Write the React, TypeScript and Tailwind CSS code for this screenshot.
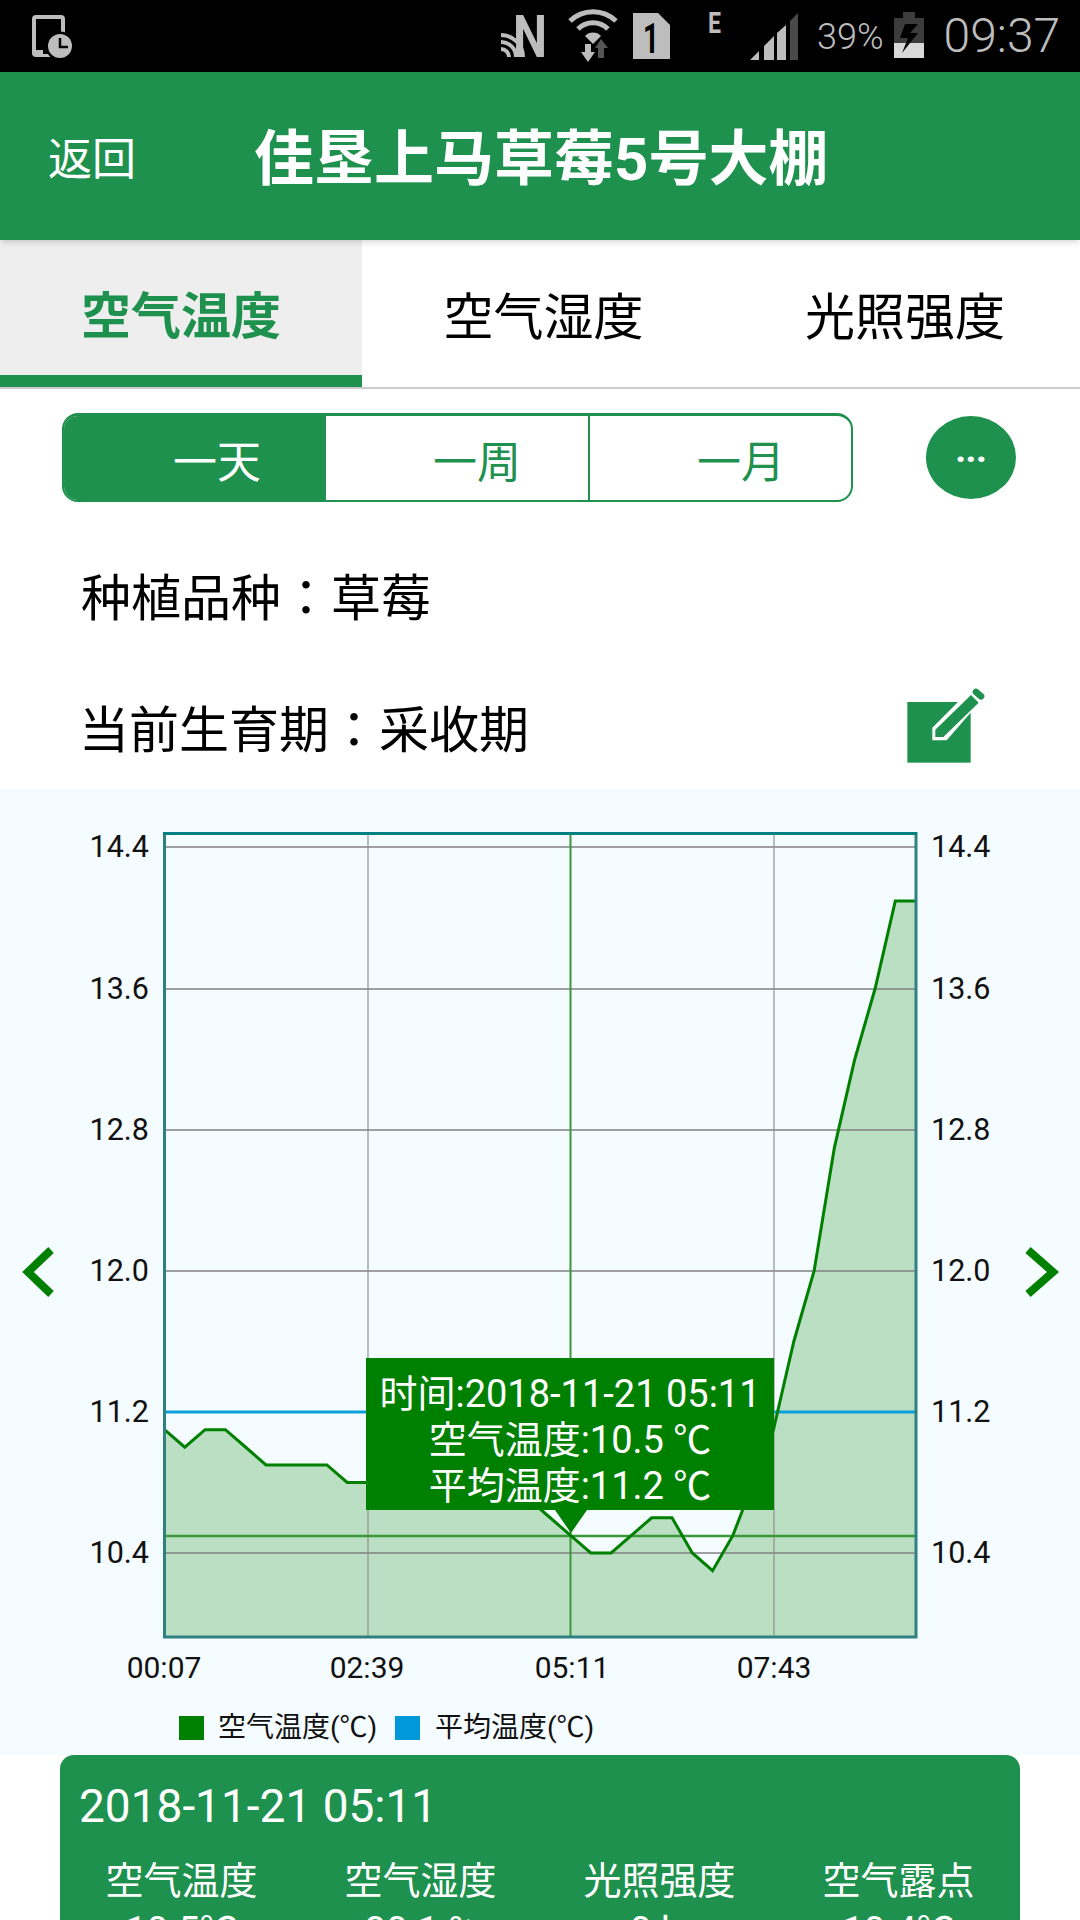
const green = "#008000";

// temperature readings, one per 20.3px step along the x axis
const temps = [
  11.1, 11.0, 11.1, 11.1, 11.0, 10.9, 10.9, 10.9, 10.9, 10.8, 10.8, 10.8, 10.8, 10.7, 10.7, 10.7, 10.7, 10.7, 10.7,
  10.6, 10.5, 10.4, 10.4, 10.5, 10.6, 10.6, 10.4, 10.3, 10.5, 10.8, 11.1, 11.6, 12.0, 12.7, 13.2, 13.6, 14.1, 14.1,
];
const px = (i: number) => 164.5 + i * 20.3;
const py = (v: number) => 1553 - (v - 10.4) * 176.25;
const linePoints = temps.map((v, i) => `${px(i)},${py(v)}`).join(" ");
const areaPoints = `${px(0)},1637 ${linePoints} ${px(37)},1637`;

const yTicks = [
  { label: "14.4", y: 847 },
  { label: "13.6", y: 989 },
  { label: "12.8", y: 1130 },
  { label: "12.0", y: 1271 },
  { label: "11.2", y: 1412 },
  { label: "10.4", y: 1553 },
];
const xTicks = [
  { label: "00:07", x: 164 },
  { label: "02:39", x: 367 },
  { label: "05:11", x: 572 },
  { label: "07:43", x: 774 },
];

function StatusIcons() {
  return (
    <svg className="h-[72px] w-[310px]" viewBox="495 0 310 72">
      {/* nfc */}
      <g fill="none" stroke="#bdbdbd" strokeWidth="4">
        <path d="M501,49 A8,8 0 0 1 509,57" />
        <path d="M501,42 A15,15 0 0 1 516,57" />
        <path d="M501,35 A22,22 0 0 1 523,57" />
      </g>
      <text x="513" y="57" fill="#bdbdbd" fontSize="60" fontWeight="700" textLength="34" lengthAdjust="spacingAndGlyphs">
        N
      </text>
      {/* wifi */}
      <g fill="none" stroke="#bdbdbd" strokeWidth="5">
        <path d="M570,21 A33,33 0 0 1 616,21" />
        <path d="M578,29 A21,21 0 0 1 608,29" />
      </g>
      <path d="M593,44 L585,36 A11,11 0 0 1 601,36 Z" fill="#bdbdbd" />
      <path d="M585,44 h6 v8 h4 l-7,10 l-7,-10 h4 Z" fill="#bdbdbd" />
      <path d="M598,58 v-10 h-3 l6,-9 l7,9 h-4 v10 Z" fill="#555" />
      {/* sim */}
      <path d="M633,13 H658 L670,25 V59 H633 Z" fill="#bdbdbd" />
      <text x="643" y="53" fill="#000" fontSize="42" fontWeight="700" textLength="16" lengthAdjust="spacingAndGlyphs">
        1
      </text>
      {/* network type */}
      <text x="708" y="33" fill="#bdbdbd" fontSize="29" fontWeight="700" textLength="13" lengthAdjust="spacingAndGlyphs">
        E
      </text>
      {/* signal */}
      <path d="M750,60 L759,51 V60 Z M764,46 L774,36 V60 H764 Z M777,33 L786,25 V60 H777 Z" fill="#bdbdbd" />
      <path d="M790,21 L798,13 V60 H790 Z" fill="#4a4a4a" />
    </svg>
  );
}

function Battery() {
  return (
    <svg className="h-[72px] w-[30px]" viewBox="892 0 30 72">
      <path d="M901,12 H913 V18 H922 V43 H892 V18 H901 Z" fill="#3c3c3c" />
      <rect x="892" y="43" width="30" height="15" fill="#d8d8d8" />
      <path d="M903,24 H916 L908,33 H916 L900,53 L906,38 H898 Z" fill="#000" />
    </svg>
  );
}

function Chevron({ d }: { d: string }) {
  return (
    <svg className="h-[60px] w-[70px] shrink-0" viewBox="0 0 70 60">
      <path d={d} fill="none" stroke={green} strokeWidth="8" />
    </svg>
  );
}

function Chart() {
  return (
    <div className="relative h-[966px] w-[940px]">
      <svg className="h-[966px] w-[940px]" viewBox="70 789 940 966">
        <polygon points={areaPoints} fill="#bbdfc3" />
        {yTicks.map((t) => (
          <line key={t.label} x1="165" x2="916" y1={t.y} y2={t.y} stroke="#808080" strokeWidth="1.5" />
        ))}
        {[368, 774].map((x) => (
          <line key={x} x1={x} x2={x} y1="833" y2="1637" stroke="#909090" strokeWidth="1.2" />
        ))}
        <line x1="570.5" x2="570.5" y1="833" y2="1637" stroke="#3c963c" strokeWidth="2" />
        <line x1="165" x2="916" y1="1536" y2="1536" stroke="#3c963c" strokeWidth="2.4" />
        <line x1="165" x2="916" y1="1412" y2="1412" stroke="#0b9fdc" strokeWidth="3" />
        <polyline points={linePoints} fill="none" stroke={green} strokeWidth="3" />
        <rect x="164.5" y="833.5" width="751.5" height="803.5" fill="none" stroke="#2f8080" strokeWidth="3" />
        <line x1="163" x2="917" y1="833.5" y2="833.5" stroke="#008080" strokeWidth="3" />
        <g fill="#111">
          {yTicks.map((t) => (
            <g key={t.label} fontSize="30.5">
              <text x="149" y={t.y + 10} textAnchor="end">
                {t.label}
              </text>
              <text x="931" y={t.y + 10}>
                {t.label}
              </text>
            </g>
          ))}
          {xTicks.map((t) => (
            <text key={t.label} x={t.x} y="1678" fontSize="30" textAnchor="middle">
              {t.label}
            </text>
          ))}
        </g>
      </svg>

      <div className="absolute left-[109px] top-[925px] flex items-center text-[28px] leading-none text-[#111]">
        <span className="h-[24px] w-[25px] bg-[#008000]" />
        <span className="ml-[14px] w-[177px]">空气温度(℃)</span>
        <span className="h-[24px] w-[25px] bg-[#0098d9]" />
        <span className="ml-[15px]">平均温度(℃)</span>
      </div>

      <div className="absolute left-[296px] top-[569px] flex h-[152px] w-[408px] flex-col justify-center bg-[#008000] pt-[12px] text-center text-[38px] leading-[46px] text-white">
        <div>时间:2018-11-21 05:11</div>
        <div>空气温度:10.5 ℃</div>
        <div>平均温度:11.2 ℃</div>
        <div className="absolute left-[189px] top-full h-0 w-0 border-x-[16px] border-t-[23px] border-x-transparent border-t-[#008000]" />
      </div>
    </div>
  );
}

export default function App() {
  const tabs = ["空气温度", "空气湿度", "光照强度"];
  const stats = [
    { name: "空气温度", value: "10.5℃" },
    { name: "空气湿度", value: "30.1 %" },
    { name: "光照强度", value: "0 lx" },
    { name: "空气露点", value: "10.4℃" },
  ];

  return (
    <div className="flex h-[1920px] w-[1080px] flex-col overflow-hidden bg-white font-['Roboto','Noto_Sans_CJK_JP',sans-serif]">
      {/* status bar */}
      <div className="flex h-[72px] shrink-0 items-center bg-black text-[#bdbdbd]">
        <svg className="ml-[28px] h-[72px] w-[50px]" viewBox="28 0 50 72">
          <path d="M36,15 H61 A4,4 0 0 1 65,19 V57 H36 A4,4 0 0 1 32,53 V19 A4,4 0 0 1 36,15 Z M36,19 V50 H61 V19 Z" fill="#bdbdbd" fillRule="evenodd" />
          <circle cx="60" cy="46" r="14.5" fill="#000" />
          <circle cx="60" cy="46" r="12" fill="#bdbdbd" />
          <path d="M60,38 V47 H68" fill="none" stroke="#000" strokeWidth="2.5" />
          <rect x="43" y="50" width="5" height="4" fill="#000" />
        </svg>
        <div className="ml-[417px]">
          <StatusIcons />
        </div>
        <span className="ml-[12px] pt-[2px] text-[36px] font-light leading-none">39%</span>
        <div className="ml-[10px]">
          <Battery />
        </div>
        <span className="ml-[20px] text-[48px] font-light leading-none">09:37</span>
      </div>

      {/* header */}
      <div className="relative z-10 flex h-[168px] shrink-0 items-center bg-[#1f914e] pl-[48px] pt-[8px] text-white shadow-md">
        <span className="text-[44px] leading-none">返回</span>
        <span className="ml-[118px] text-[60px] font-bold leading-none">佳垦上马草莓5号大棚</span>
      </div>

      {/* tabs */}
      <div className="grid h-[149px] w-[1085px] shrink-0 grid-cols-[362px_363px_360px] border-b-2 border-[#cccccc]">
        {tabs.map((tab, i) => (
          <div
            key={tab}
            className={
              i === 0
                ? "flex items-center justify-center border-b-[12px] border-[#1f914e] bg-[#eeeeee] pt-[20px] text-[50px] font-bold text-[#1f914e]"
                : "flex items-center justify-center pt-[10px] text-[50px] text-black"
            }
          >
            {tab}
          </div>
        ))}
      </div>

      {/* range switch */}
      <div className="mt-[24px] flex shrink-0 items-center pl-[62px]">
        <div className="flex h-[89px] w-[791px] overflow-hidden rounded-[16px] border-2 border-t-[3px] border-[#1f914e] text-[44px] leading-none">
          <div className="flex w-[260px] items-center justify-center bg-[#1f914e] pl-[46px] pt-[10px] text-white">一天</div>
          <div className="flex w-[266px] items-center justify-center border-x-2 border-[#1f914e] pl-[40px] pt-[10px] text-[#1f914e]">一周</div>
          <div className="flex flex-1 items-center justify-center pl-[41px] pt-[10px] text-[#1f914e]">一月</div>
        </div>
        <div className="ml-[73px] flex h-[83px] w-[90px] items-center justify-center rounded-[50%] bg-[#1f914e] pb-[16px] text-[34px] font-black leading-none text-white">
          ...
        </div>
      </div>

      {/* planting info */}
      <div className="mt-[27px] flex h-[133px] shrink-0 items-center pl-[81px] pt-[6px] text-[50px] leading-none text-black">
        种植品种：草莓
      </div>
      <div className="flex h-[127px] shrink-0 items-center justify-between pl-[79px] pr-[80px] text-[50px] leading-none text-black">
        <span className="pt-[11px]">当前生育期：采收期</span>
        <svg className="h-[90px] w-[110px]" viewBox="0 0 330 270">
          <rect x="52" y="63" width="190" height="182" fill="#1f914e" />
          <polygon points="127,178 127,140 245,22 290,40 170,178" fill="#fff" />
          <polygon points="136,168 136,146 243,42 266,65 160,168" fill="#1f914e" />
          <line x1="258" y1="33" x2="273" y2="46" stroke="#1f914e" strokeWidth="20" strokeLinecap="round" />
        </svg>
      </div>

      {/* chart */}
      <div className="flex h-[966px] shrink-0 items-center bg-[#f5fcff]">
        <Chevron d="M51,8 L28,30 L51,52" />
        <Chart />
        <Chevron d="M18,8 L43,30 L18,52" />
      </div>

      {/* selected reading */}
      <div className="mx-[60px] w-[960px] flex-1 shrink-0 rounded-t-[14px] bg-[#1f914e] px-[19px] pt-[24px] text-white">
        <div className="text-[46px] leading-[54px]">2018-11-21 05:11</div>
        <div className="-mx-[19px] mt-[23px] grid grid-cols-4 px-[2px] text-center text-[38px] leading-[50px]">
          {stats.map((s) => (
            <div key={s.name}>
              <div>{s.name}</div>
              <div>{s.value}</div>
            </div>
          ))}
        </div>
      </div>
    </div>
  );
}
